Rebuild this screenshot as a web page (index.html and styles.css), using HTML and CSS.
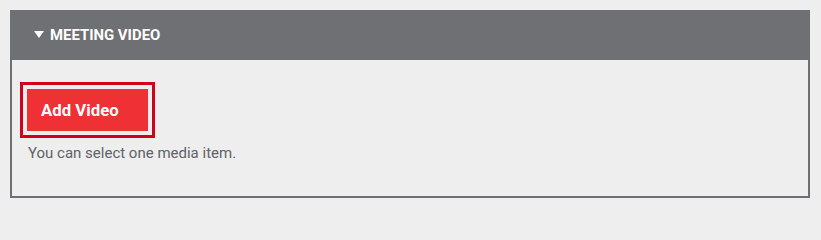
FILE: index.html
```html
<!DOCTYPE html>
<html>
<head>
<meta charset="utf-8">
<link rel="stylesheet" href="styles.css">
</head>
<body>
<section class="panel">
  <header class="panel-head"><svg class="caret" width="10" height="7" viewBox="0 0 10 7"><polygon points="0,0 10,0 5,7" fill="#ffffff"/></svg>MEETING VIDEO</header>
  <div class="panel-body">
    <button class="add-btn">Add Video</button>
    <p class="hint">You can select one media item.</p>
  </div>
</section>
</body>
</html>
```
FILE: styles.css
```css
html, body { margin: 0; padding: 0; }
html { height: 208px; overflow: hidden; }
body {
  background: #eeeeee;
  font-family: Roboto, "Liberation Sans", sans-serif;
  padding: 10px 11px 0 10px;
}
.panel {
  border: 2px solid #6f6e73;
  border-top: none;
  background: #eeeeee;
  box-sizing: border-box;
  height: 188px;
}
.panel-head {
  display: flex;
  align-items: center;
  background: #6f7073;
  color: #ffffff;
  font-weight: 700;
  font-size: 14.9px;
  height: 50px;
  margin: 0 -2px;
  padding-left: 24px;
}
.caret { margin-right: 6px; margin-top: -1px; }
.panel-body {
  padding: 29px 0 0 15px;
}
.add-btn {
  display: block;
  background: #ef3035;
  color: #ffffff;
  border: none;
  font-family: Roboto, "Liberation Sans", sans-serif;
  font-weight: 700;
  font-size: 16.8px;
  width: 121px;
  height: 42px;
  padding: 0 0 0 14px;
  text-align: left;
  outline: 3px solid #d0021b;
  outline-offset: 4px;
  margin: 0;
}
.hint {
  margin: 11px 0 0 1px;
  font-size: 15px;
  color: #5f6268;
  line-height: 22px;
}
```
